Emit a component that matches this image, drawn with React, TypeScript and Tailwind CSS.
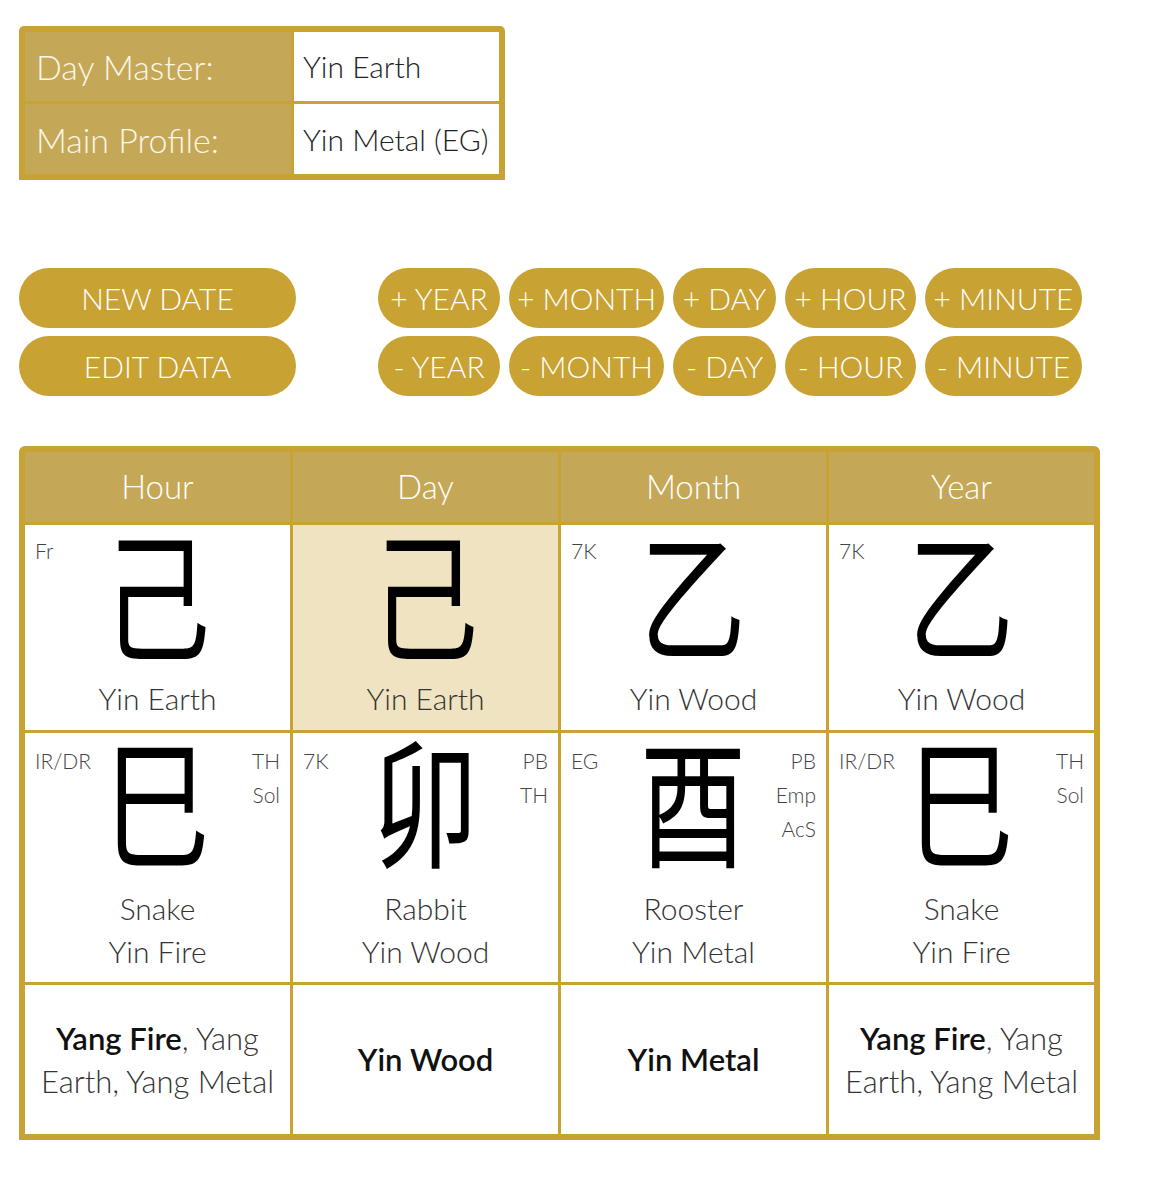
import React from "react";

const FONT = { fontFamily: "Lato, 'Noto Sans', sans-serif" };
const CJK = { fontFamily: "'Noto Sans CJK SC', 'Noto Sans CJK TC', sans-serif" };

const columns = ["Hour", "Day", "Month", "Year"];

const stems = [
  { tag: "Fr", char: "己", name: "Yin Earth", highlight: false },
  { tag: "", char: "己", name: "Yin Earth", highlight: true },
  { tag: "7K", char: "乙", name: "Yin Wood", highlight: false },
  { tag: "7K", char: "乙", name: "Yin Wood", highlight: false },
];

const branches = [
  { left: "IR/DR", right: ["TH", "Sol"], char: "巳", animal: "Snake", element: "Yin Fire" },
  { left: "7K", right: ["PB", "TH"], char: "卯", animal: "Rabbit", element: "Yin Wood" },
  { left: "EG", right: ["PB", "Emp", "AcS"], char: "酉", animal: "Rooster", element: "Yin Metal" },
  { left: "IR/DR", right: ["TH", "Sol"], char: "巳", animal: "Snake", element: "Yin Fire" },
];

const hidden = [
  { main: "Yang Fire", rest: ", Yang Earth, Yang Metal" },
  { main: "Yin Wood", rest: "" },
  { main: "Yin Metal", rest: "" },
  { main: "Yang Fire", rest: ", Yang Earth, Yang Metal" },
];

const stepButtons = [
  { label: "YEAR", w: "w-[122px]" },
  { label: "MONTH", w: "w-[155px]" },
  { label: "DAY", w: "w-[103px]" },
  { label: "HOUR", w: "w-[131px]" },
  { label: "MINUTE", w: "w-[157px]" },
];

function PillButton({ label, width }: { label: string; width: string }) {
  return (
    <button
      className={`h-[60px] ${width} rounded-full bg-[#c9a234] text-white text-[30px] font-light leading-none whitespace-nowrap`}
    >
      {label}
    </button>
  );
}

export default function App() {
  return (
    <div className="bg-white min-h-[1178px] w-[1151px] pl-[19px] pt-[26px]" style={FONT}>
      {/* Summary */}
      <div className="w-[486px] border-[6px] border-[#c9a234] rounded-t-[5px] bg-[#c9a234] grid grid-cols-[266px_1fr] gap-[3px]">
        <div className="h-[69px] bg-[#c5a857] flex items-center pl-[11px] text-[34px] font-light text-[#fbf6e6]">
          Day Master:
        </div>
        <div className="h-[69px] bg-white flex items-center pl-[9px] text-[30px] font-light text-[#222]">
          Yin Earth
        </div>
        <div className="h-[70px] bg-[#c5a857] flex items-center pl-[11px] text-[34px] font-light text-[#fbf6e6]">
          Main Profile:
        </div>
        <div className="h-[70px] bg-white flex items-center pl-[9px] text-[30px] font-light text-[#222]">
          Yin Metal (EG)
        </div>
      </div>

      {/* Controls */}
      <div className="mt-[88px] flex gap-[82px]">
        <div className="flex flex-col gap-[8px]">
          <PillButton label="NEW DATE" width="w-[277px]" />
          <PillButton label="EDIT DATA" width="w-[277px]" />
        </div>
        <div className="flex flex-col gap-[8px]">
          <div className="flex gap-[9px]">
            {stepButtons.map((b) => (
              <PillButton key={`p-${b.label}`} label={`+ ${b.label}`} width={b.w} />
            ))}
          </div>
          <div className="flex gap-[9px]">
            {stepButtons.map((b) => (
              <PillButton key={`m-${b.label}`} label={`- ${b.label}`} width={b.w} />
            ))}
          </div>
        </div>
      </div>

      {/* Chart */}
      <div className="mt-[50px] w-[1081px] border-[6px] border-[#c9a234] rounded-t-[6px] bg-[#c9a234] grid grid-cols-4 gap-[3px]">
        {columns.map((c) => (
          <div key={c} className="h-[70px] bg-[#c5a857] flex items-center justify-center text-[33px] font-light text-white">
            {c}
          </div>
        ))}

        {stems.map((s, i) => (
          <div
            key={`s-${i}`}
            className={`relative h-[205px] flex flex-col items-center ${s.highlight ? "bg-[#f0e3c1]" : "bg-white"}`}
          >
            <span className="absolute left-[10px] top-[12px] text-[21px] font-light text-[#444] leading-[28px]">{s.tag}</span>
            <div className="mt-[6px] text-[140px] leading-[116px] text-black scale-x-[0.76]" style={CJK}>
              {s.char}
            </div>
            <div className="mt-[33px] text-[30px] font-light text-[#333] leading-[36px]">{s.name}</div>
          </div>
        ))}

        {branches.map((b, i) => (
          <div key={`b-${i}`} className="relative h-[249px] bg-white flex flex-col items-center">
            <span className="absolute left-[10px] top-[14px] text-[21px] font-light text-[#444] leading-[28px]">{b.left}</span>
            <div className="absolute right-[10px] top-[11px] flex flex-col items-end text-[21px] font-light text-[#444] leading-[34px]">
              {b.right.map((r) => (
                <span key={r}>{r}</span>
              ))}
            </div>
            <div className="mt-[5px] text-[140px] leading-[116px] text-black scale-x-[0.76]" style={CJK}>
              {b.char}
            </div>
            <div className="mt-[33px] text-[30px] font-light text-[#333] leading-[43px] text-center">
              {b.animal}
              <br />
              {b.element}
            </div>
          </div>
        ))}

        {hidden.map((h, i) => (
          <div key={`h-${i}`} className="h-[149px] bg-white flex items-center justify-center px-[10px]">
            <p className="text-center text-[31px] leading-[43px] font-light text-[#333]">
              <span className="font-semibold text-[#111]">{h.main}</span>
              {h.rest}
            </p>
          </div>
        ))}
      </div>
    </div>
  );
}
